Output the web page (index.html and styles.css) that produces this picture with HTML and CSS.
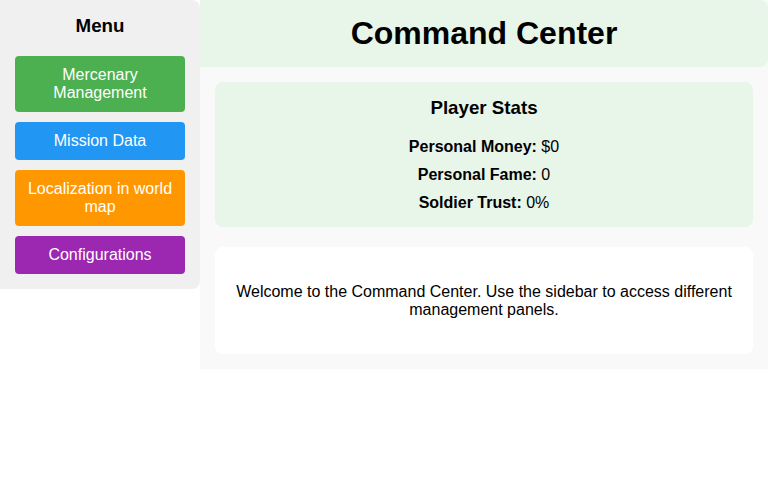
FILE: index.html
```html
<!DOCTYPE html>
<html>
<head>
<meta charset="utf-8">
<link rel="stylesheet" href="styles.css">
</head>
<body>
<div class="layout">
  <aside class="sidebar">
    <h3 class="menu-title">Menu</h3>
    <nav class="menu">
      <button class="btn btn-green">Mercenary Management</button>
      <button class="btn btn-blue">Mission Data</button>
      <button class="btn btn-orange">Localization in world map</button>
      <button class="btn btn-purple">Configurations</button>
    </nav>
  </aside>
  <main class="main">
    <header class="header"><h1>Command Center</h1></header>
    <div class="content">
      <section class="card stats">
        <h3>Player Stats</h3>
        <p class="stat"><strong>Personal Money:</strong> $0</p>
        <p class="stat"><strong>Personal Fame:</strong> 0</p>
        <p class="stat"><strong>Soldier Trust:</strong> 0%</p>
      </section>
      <section class="card welcome">
        <p>Welcome to the Command Center. Use the sidebar to access different management panels.</p>
      </section>
    </div>
  </main>
</div>
</body>
</html>
```
FILE: styles.css
```css
* { box-sizing: border-box; }
html, body { margin: 0; padding: 0; background: #ffffff; }
body { font-family: "Liberation Sans", Arial, sans-serif; font-size: 16px; color: #000; }

.layout { display: flex; align-items: flex-start; }

.sidebar {
  width: 200px;
  flex: 0 0 200px;
  background: #f0f0f0;
  padding: 15px;
  border-radius: 0 8px 8px 0;
}
.menu-title {
  margin: 0 0 19px;
  text-align: center;
  font-size: 18.72px;
  line-height: 22px;
}
.menu { display: flex; flex-direction: column; gap: 10px; }
.btn {
  display: block;
  width: 100%;
  border: none;
  border-radius: 4px;
  padding: 10px;
  color: #fff;
  font-family: "Liberation Sans", Arial, sans-serif;
  font-size: 16px;
  line-height: 18px;
  text-align: center;
}
.btn-green { background: #4caf50; }
.btn-blue { background: #2196f3; }
.btn-orange { background: #ff9800; }
.btn-purple { background: #9c27b0; }

.main { flex: 1; background: #f9f9f9; }
.header {
  background: #e8f5e9;
  padding: 15px;
  border-radius: 0 8px 8px 0;
  text-align: center;
}
.header h1 { margin: 0; font-size: 32px; line-height: 37px; }

.content { padding: 15px; display: flex; flex-direction: column; gap: 20px; }
.card { border-radius: 8px; padding: 15px; text-align: center; }
.stats { background: #e8f5e9; }
.stats h3 { margin: 0 0 19px; font-size: 18.72px; line-height: 22px; }
.stat { margin: 0 0 9.5px; line-height: 18.4px; }
.stat:last-child { margin-bottom: 0; }
.welcome { background: #ffffff; padding: 35.5px 20px; }
.welcome p { margin: 0; line-height: 18px; }
```
